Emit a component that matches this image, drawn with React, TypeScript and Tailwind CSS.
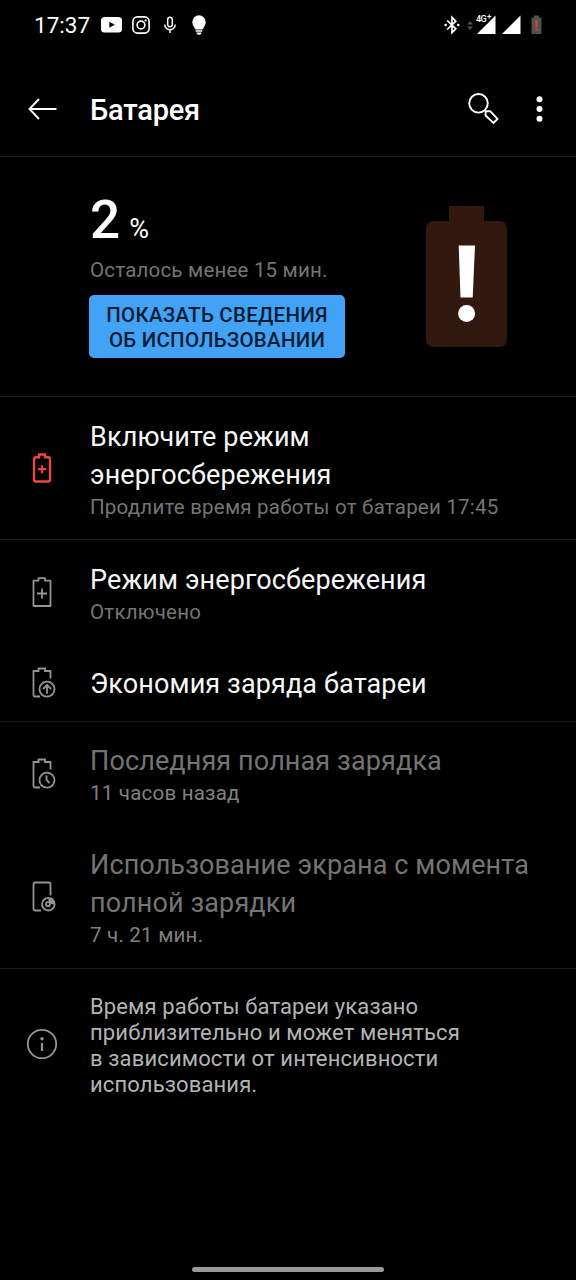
import React from 'react';
import clsx from 'clsx';

interface RowProps {
  icon: React.ReactNode;
  title: string[];
  subtitle?: string;
  disabled?: boolean;
}

function Row({ icon, title, subtitle, disabled }: RowProps) {
  return (
    <div className={clsx('flex items-center pt-5', subtitle ? 'pb-5' : 'pb-[19px]')}>
      <div className="w-[90px] shrink-0 pl-6">{icon}</div>
      <div className={clsx(!disabled && '-mb-px pt-px')}>
        <h2
          className={clsx(
            'text-[27px] leading-[38px] tracking-[0.12px] whitespace-nowrap',
            disabled ? 'text-[#747474]' : 'text-[#f8f8f8]'
          )}
        >
          {title.map((line) => (
            <span key={line} className="block">{line}</span>
          ))}
        </h2>
        {subtitle && (
          <p
            className={clsx(
              'text-[20.5px] leading-[26px] tracking-[0.22px] whitespace-nowrap',
              disabled ? 'text-[#808080]' : 'text-[#757575]'
            )}
          >
            {subtitle}
          </p>
        )}
      </div>
    </div>
  );
}

function RowIcon({ children, className }: { children: React.ReactNode; className?: string }) {
  return (
    <svg
      viewBox="0 0 36 36"
      fill="none"
      stroke="currentColor"
      strokeWidth="1.8"
      className={clsx('h-9 w-9', className ?? 'text-[#949494]')}
    >
      {children}
    </svg>
  );
}

// Battery outline with the lower right corner left open for a badge
const OPEN_BATTERY = 'M16 31.5h-5a1.5 1.5 0 0 1-1.5-1.5V6h5V3.5h6.5V6h5.500v7.500';

function StatusBar() {
  return (
    <div className="flex h-[50px] items-center justify-between pr-[34px] pl-[34px] text-white">
      <div className="flex items-center">
        <span className="w-[67px] text-[22.5px] leading-6">17:37</span>
        <svg viewBox="0 0 21 16" className="h-4 w-[21px]">
          <rect width="21" height="15.5" rx="3.5" fill="currentColor" />
          <path d="M8.3 4.800v6l5.500-3z" fill="#000" />
        </svg>
        <svg viewBox="0 0 18 18" fill="none" stroke="currentColor" strokeWidth="1.6" className="ml-[10px] h-[18px] w-[18px]">
          <rect x="0.9" y="0.9" width="16.2" height="16.2" rx="4.5" />
          <circle cx="9" cy="9" r="3.9" />
          <circle cx="13.6" cy="4.4" r="1.1" fill="currentColor" stroke="none" />
        </svg>
        <svg viewBox="0 0 12 18" fill="none" stroke="currentColor" strokeWidth="1.5" className="ml-[14px] h-[18px] w-3">
          <rect x="3.7" y="1.2" width="4.6" height="9.6" rx="2.3" />
          <path d="M.8 8.500a5.200 5.200 0 0 0 10.400 0M6 13.600V17" />
        </svg>
        <svg viewBox="0 0 14 20" fill="currentColor" className="ml-4 h-5 w-[14px]">
          <path d="M7 .3a6.700 6.700 0 0 0-6.700 6.600c0 3.200 1.700 4.600 3.100 7.500h7.200c1.400-2.900 3.100-4.300 3.100-7.500A6.700 6.700 0 0 0 7 .3z" />
          <path d="M3.700 15.300h6.600v1.500H3.700zM4.500 17.500h5c0 1.500-1.200 2.300-2.500 2.300s-2.500-.8-2.500-2.300z" />
        </svg>
      </div>

      <div className="flex items-center">
        <svg viewBox="0 0 16 20" fill="none" stroke="currentColor" strokeWidth="1.7" className="h-5 w-4">
          <path d="M3.200 5.500l8.600 8.300L8 17.700V2.300l3.800 3.900-8.600 8.300" />
          <circle cx="1.6" cy="10" r="1.3" fill="currentColor" stroke="none" />
          <circle cx="14.2" cy="10" r="1.3" fill="currentColor" stroke="none" />
        </svg>
        <svg viewBox="0 0 6 9" fill="#505050" className="ml-[7px] h-[9px] w-1.5">
          <path d="M0 3.600L3 0l3 3.600zM0 5.400h6L3 9z" />
        </svg>
        <div className="relative ml-1 h-5 w-[19px]">
          <svg viewBox="0 0 19 20" fill="currentColor" className="h-5 w-[19px]">
            <path d="M0 19L18.500 .5V19z" />
            <path d="M0 0h10.500v8.500H0z" fill="#000" />
          </svg>
          <span className="absolute top-0 -left-[1px] text-[9px] leading-[8px] font-medium tracking-[-0.5px]">4G</span>
          <span className="absolute -top-[2px] left-[10px] text-[8px] leading-[8px] font-bold [text-shadow:0_0_1px_#000,0_0_1px_#000]">+</span>
        </div>
        <svg viewBox="0 0 19 20" fill="currentColor" className="ml-[6px] h-5 w-[19px]">
          <path d="M0 19L18.500 .5V19z" />
        </svg>
        <svg viewBox="0 0 11 20" className="ml-[10px] h-5 w-[11px]">
          <path d="M3 .5h5v2h2.500v16.500H.5v-16.500H3z" fill="#515151" />
          <path d="M4.200 5.500h2.600l-.4 7H4.600zM4.500 13.500h2v2h-2z" fill="#d04c30" />
        </svg>
      </div>
    </div>
  );
}

export default function App() {
  return (
    <div className="flex h-[1280px] w-[576px] flex-col bg-black font-[Roboto,sans-serif]">
      <StatusBar />

      {/* Toolbar */}
      <header className="flex h-[106px] items-center pt-[11px] text-white">
        <button className="w-[90px] pl-7">
          <svg viewBox="0 0 30 22" fill="none" stroke="currentColor" strokeWidth="1.9" className="h-[22px] w-[30px]">
            <path d="M28.500 11H1.500M11 1L1.500 11l9.500 10" />
          </svg>
        </button>
        <h1 className="flex-1 pt-[3px] text-[29px] leading-9 font-medium tracking-[-0.2px]">Батарея</h1>
        <button>
          <svg viewBox="0 0 32 32" fill="none" stroke="currentColor" strokeWidth="1.9" className="h-8 w-8">
            <circle cx="10.5" cy="10.3" r="9.3" />
            <path d="M17.600 18.200h4.600l7.300 7.700-4 4-7.900-7.400z" />
          </svg>
        </button>
        <button className="mr-[33px] ml-9">
          <svg viewBox="0 0 7 28" fill="currentColor" className="h-7 w-[7px]">
            <circle cx="3.5" cy="4.2" r="3" />
            <circle cx="3.5" cy="14" r="3" />
            <circle cx="3.5" cy="23.8" r="3" />
          </svg>
        </button>
      </header>

      {/* Charge level */}
      <section className="flex h-[240px] justify-between border-t border-[#1e1e1e] pl-[89px]">
        <div className="pt-8">
          <div className="flex items-baseline pl-px text-white">
            <span className="text-[53px] leading-[62px] font-medium">2</span>
            <span className="ml-[9px] text-[27px]">%</span>
          </div>
          <p className="mt-1.5 pl-px text-[20.5px] leading-[26px] tracking-[0.2px] text-[#757575]">Осталось менее 15 мин.</p>
          <button className="mt-3 h-[63px] w-[256px] rounded-[5px] bg-[#42a2f6] pt-0.5 text-[20.5px] leading-[25px] font-medium tracking-[0.25px] text-[#061c33]">
            ПОКАЗАТЬ СВЕДЕНИЯ
            <br />
            ОБ ИСПОЛЬЗОВАНИИ
          </button>
        </div>
        <svg viewBox="0 0 82 142" className="mt-[49px] mr-[68px] h-[142px] w-[82px]">
          <path d="M23 0h35v15H74a7 7 0 0 1 7 7v112a7 7 0 0 1-7 7H7a7 7 0 0 1-7-7V22a7 7 0 0 1 7-7h16z" fill="#33180f" />
          <path d="M32.700 39.500h16.300L46.700 91.500H34.500z" fill="#fff" />
          <circle cx="40.6" cy="107.5" r="8.5" fill="#fff" />
        </svg>
      </section>

      <section className="border-t border-[#1e1e1e]">
        <Row
          icon={
            <RowIcon className="text-[#ed4545]">
              <path d="M12 7.200h3V4.500h6v2.700h3q2 0 2 2V29.500q0 2-2 2H12q-2 0-2-2V9.200q0-2 2-2z" strokeWidth="2.4" />
              <path d="M18 15.200v8M14 19.200h8" strokeWidth="2.2" />
            </RowIcon>
          }
          title={['Включите режим', 'энергосбережения']}
          subtitle="Продлите время работы от батареи 17:45"
        />
      </section>

      <section className="border-t border-[#1e1e1e]">
        <Row
          icon={
            <RowIcon>
              <path d="M9.500 6.700h5V4.200h6.500v2.500h5.500v25.300h-17z" strokeLinejoin="round" />
              <path d="M18 14.500v10M13 19.500h10" />
            </RowIcon>
          }
          title={['Режим энергосбережения']}
          subtitle="Отключено"
        />
        <Row
          icon={
            <RowIcon>
              <path d={OPEN_BATTERY} />
              <circle cx="23" cy="24.2" r="7.5" />
              <path d="M23 28.700v-8.500M19 24l4-4 4 4" />
            </RowIcon>
          }
          title={['Экономия заряда батареи']}
        />
      </section>

      <section className="border-t border-[#1e1e1e]">
        <Row
          disabled
          icon={
            <RowIcon>
              <path d={OPEN_BATTERY} />
              <circle cx="23" cy="24.2" r="7.5" />
              <path d="M22.500 19.500v4.500l3 3" />
            </RowIcon>
          }
          title={['Последняя полная зарядка']}
          subtitle="11 часов назад"
        />
        <Row
          disabled
          icon={
            <RowIcon>
              <path d="M17 31.500h-6A1.500 1.500 0 0 1 9.500 30V5q0-1.500 1.500-1.500h14q1.500 0 1.500 1.500v11.500" />
              <circle cx="24.3" cy="25.2" r="6.3" />
              <circle cx="24" cy="25.2" r="2" />
              <path d="M24.500 19.200v4l3.500 2h2.600a6.300 6.300 0 0 0-6.100-6z" fill="currentColor" stroke="none" />
            </RowIcon>
          }
          title={['Использование экрана с момента', 'полной зарядки']}
          subtitle="7 ч. 21 мин."
        />
      </section>

      <section className="flex items-start border-t border-[#1e1e1e] pt-[25px]">
        <div className="w-[90px] shrink-0 pt-8 pl-6">
          <RowIcon>
            <circle cx="18" cy="18" r="14.2" />
            <path d="M18 17v8" strokeWidth="2.2" />
            <circle cx="18" cy="12.8" r="1.7" fill="currentColor" stroke="none" />
          </RowIcon>
        </div>
        <p className="text-[22px] leading-[26px] tracking-[0.13px] text-[#b4b4b4]">
          Время работы батареи указано
          <br />
          приблизительно и может меняться
          <br />
          в зависимости от интенсивности
          <br />
          использования.
        </p>
      </section>

      {/* Gesture bar */}
      <div className="mx-auto mt-auto mb-2 h-[5px] w-[192px] rounded-full bg-[#999]" />
    </div>
  );
}
